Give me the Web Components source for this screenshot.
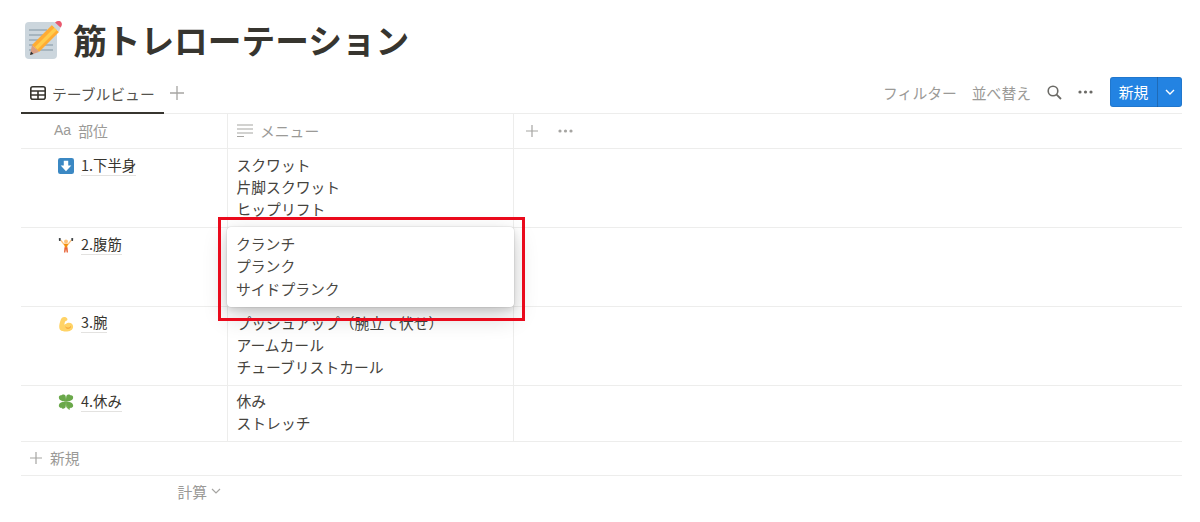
<!DOCTYPE html>
<html lang="ja">
<head>
<meta charset="utf-8">
<title>筋トレローテーション</title>
<style>
    html, body { margin: 0; background: #fff; }
    body {
        font-family: "Noto Sans CJK JP", "Noto Sans", sans-serif;
        color: #37352f;
        width: 1200px;
        height: 522px;
        overflow: hidden;
    }
</style>
</head>
<body>
<db-page>
    <page-title slot="title">筋トレローテーション</page-title>
    <view-bar slot="bar"></view-bar>
    <table-head slot="table"></table-head>
    <table-row slot="table" height="78" pad="5" name="1.下半身" icon="down">
        <div>スクワット</div><div>片脚スクワット</div><div>ヒップリフト</div>
    </table-row>
    <table-row slot="table" height="78" pad="5" name="2.腹筋" icon="lift"></table-row>
    <table-row slot="table" height="78" pad="5" nudge="-1" name="3.腕" icon="arm">
        <div>プッシュアップ（腕立て伏せ）</div><div>アームカール</div><div>チューブリストカール</div>
    </table-row>
    <table-row slot="table" height="55" pad="4" name="4.休み" icon="clover">
        <div>休み</div><div>ストレッチ</div>
    </table-row>
    <table-foot slot="table"></table-foot>
    <cell-popup slot="over">
        <div>クランチ</div><div>プランク</div><div>サイドプランク</div>
    </cell-popup>
</db-page>

<script>
(function () {
    const ICONS = {
        down: `<svg viewBox="0 0 36 36" width="16" height="16"><rect x="0" y="0" width="36" height="36" rx="5" fill="#3b88c3"/><path d="M18 30 L6 17 h7 V6 h10 v11 h7 z" fill="#fff"/></svg>`,
        lift: `<svg viewBox="0 0 36 36" width="16" height="16">
            <path d="M6 7 L14 17 M30 7 L22 17" stroke="#ffc27a" stroke-width="3" fill="none"/>
            <rect x="2" y="2" width="4" height="7" rx="1.5" fill="#3a3f42"/><rect x="30" y="2" width="4" height="7" rx="1.5" fill="#3a3f42"/>
            <circle cx="18" cy="10" r="4.4" fill="#ffc27a"/>
            <path d="M13 15 h10 l-3 9 h-4 z" fill="#f4900c"/>
            <path d="M14.5 23 h7 l1 12 h-3 l-1.5 -8 l-1.5 8 h-3 z" fill="#e8663a"/>
        </svg>`,
        arm: `<svg viewBox="0 0 36 36" width="16" height="16">
            <path d="M14 2 C9 2 7 5 6 9 C4 15 2 21 3 27 C4 33 10 35 17 35 C27 35 34 31 34 24 C34 17 27 14 21 16 C18 17 16 19 15 20 C14 17 15 14 17 11 C20 11 22 9 21 6 C20 3 17 2 14 2 z" fill="#ffd366"/>
            <path d="M17 25 C20 29 26 28 29 24" stroke="#f19020" stroke-width="2" fill="none"/>
        </svg>`,
        clover: `<svg viewBox="0 0 36 36" width="16" height="16">
            <g fill="#6aa84a">
                <path d="M18 17 C12 17 3 15 2 9 C1 4 5 2 8 3 C9 0 15 0 17 4 C18 8 18 13 18 17 z"/>
                <path d="M18 17 C24 17 33 15 34 9 C35 4 31 2 28 3 C27 0 21 0 19 4 C18 8 18 13 18 17 z"/>
                <path d="M18 17 C12 17 3 19 2 25 C1 30 5 32 8 31 C9 34 15 34 17 30 C18 26 18 21 18 17 z"/>
                <path d="M18 17 C24 17 33 19 34 25 C35 30 31 32 28 31 C27 34 21 34 19 30 C18 26 18 21 18 17 z"/>
            </g>
            <path d="M18 17 C18 25 21 31 26 35" stroke="#77b255" stroke-width="2.4" fill="none"/>
        </svg>`,
        memo: `<svg viewBox="0 0 38 38" width="38" height="38">
            <rect x="1" y="1" width="32" height="37" rx="4" fill="#ccd6dd"/>
            <g stroke="#99aab5" stroke-width="1.6">
                <path d="M5 9 H23 M5 14 H20 M5 19 H17 M5 24 H29 M5 29 H29"/>
            </g>
            <path d="M28 4 L35 11 L15 31 L8 24 z" fill="#ffac33"/>
            <path d="M30.5 6.5 L33 9 L13.5 28.5 L11 26 z" fill="#ffcc4d"/>
            <path d="M8 24 L15 31 L6 34 z" fill="#d99e82"/>
            <path d="M7 30.5 L9.5 33 L6 34 z" fill="#292f33"/>
            <path d="M28 4 L30 2 L33 1 L37 5 L36 8 L35 11 z" fill="#ccd6dd"/>
            <path d="M31 1.5 C33 -0.5 36 -0.5 37 1 C38.5 2.5 38 5 36.5 6.5 z" fill="#ea596e"/>
        </svg>`
    };

    const GREY = "#9b9a97";
    const DOTS = `<svg viewBox="0 0 15 4" width="15" height="4"><circle cx="2" cy="2" r="1.6"/><circle cx="7.5" cy="2" r="1.6"/><circle cx="13" cy="2" r="1.6"/></svg>`;

    function define(name, html) {
        customElements.define(name, class extends HTMLElement {
            constructor() {
                super();
                let shadowRoot = this.attachShadow({mode: "open"});
                shadowRoot.innerHTML = typeof html === "function" ? html(this) : html;
            }
        });
    }

    define("db-page", `
        <style>
            :host { display: block; position: relative; width: 1200px; height: 522px; }
            .wrap { display: flex; flex-direction: column; padding: 21px 18px 0 21px; }
            .over { position: absolute; left: 227px; top: 227px; }
            .mark {
                position: absolute; left: 218px; top: 217px;
                width: 301px; height: 98px;
                border: 3px solid #ea0a1c;
            }
        </style>
        <div class="wrap">
            <slot name="title"></slot>
            <slot name="bar"></slot>
            <slot name="table"></slot>
        </div>
        <div class="over"><slot name="over"></slot></div>
        <div class="mark"></div>
    `);

    define("page-title", `
        <style>
            :host { display: flex; align-items: center; height: 38px; margin-left: 3px; gap: 11px; }
            h1 { margin: 0; font-size: 33.7px; line-height: 38px; font-weight: 700; color: #37352f; white-space: nowrap; }
            svg { display: block; }
        </style>
        ${ICONS.memo}
        <h1><slot></slot></h1>
    `);

    define("view-bar", `
        <style>
            :host {
                display: flex; align-items: center; justify-content: space-between;
                height: 55px; box-sizing: border-box; padding-top: 16px;
                border-bottom: 1px solid #ededec; font-size: 14.8px;
            }
            .tab {
                display: flex; align-items: center; width: 143px; height: 38px; box-sizing: border-box;
                padding: 0 0 2px 9px; gap: 6px; border-bottom: 2px solid #37352f; margin-bottom: -1px;
                color: #55534e; white-space: nowrap;
            }
            .left { display: flex; align-items: center; gap: 6px; align-self: flex-end; }
            .plus { display: block; margin-top: -3px; }
            .right { display: flex; align-items: center; color: ${GREY}; white-space: nowrap; padding-bottom: 4px; }
            .right .txt { padding-top: 1px; }
            .txt + .txt { margin-left: 15px; }
            .search { margin-left: 16px; display: block; }
            .dots { margin-left: 16px; display: flex; fill: #6b6a66; }
            .btn {
                display: flex; align-items: center; margin-left: 17px; width: 72px; height: 30px;
                border-radius: 3px; background: #2383e2; color: #fff;
                box-shadow: inset 0 0 0 1px rgba(15,15,15,.1);
            }
            .btn b { font-weight: 400; width: 47px; text-align: center; border-right: 1px solid rgba(15,15,15,.2); line-height: 30px; }
            .btn i { flex: 1; display: flex; justify-content: center; }
        </style>
        <div class="left">
            <div class="tab">
                <svg viewBox="0 0 16 14" width="16" height="14"><rect x="0.8" y="0.8" width="14.4" height="12.4" rx="2" fill="none" stroke="#37352f" stroke-width="1.6"/><path d="M1 5 H15 M1 9 H15 M8 5 V13" stroke="#37352f" stroke-width="1.6"/></svg>
                テーブルビュー
            </div>
            <svg class="plus" viewBox="0 0 14 14" width="14" height="14"><path d="M7 0 V14 M0 7 H14" stroke="#a6a5a2" stroke-width="1.3"/></svg>
        </div>
        <div class="right">
            <span class="txt">フィルター</span><span class="txt">並べ替え</span>
            <svg class="search" viewBox="0 0 15 15" width="15" height="15"><circle cx="6" cy="6" r="4.8" fill="none" stroke="#6b6a66" stroke-width="1.6"/><path d="M9.6 9.6 L14 14" stroke="#6b6a66" stroke-width="1.8"/></svg>
            <span class="dots">${DOTS}</span>
            <div class="btn">
                <b>新規</b>
                <i><svg viewBox="0 0 10 6" width="10" height="6"><path d="M1 1 L5 5 L9 1" fill="none" stroke="#fff" stroke-width="1.4"/></svg></i>
            </div>
        </div>
    `);

    define("table-head", `
        <style>
            :host {
                display: grid; grid-template-columns: 207px 286px 1fr; height: 35px; box-sizing: border-box;
                border-bottom: 1px solid #ededec; color: ${GREY}; font-size: 14.8px;
            }
            .c { display: flex; align-items: center; box-sizing: border-box; border-right: 1px solid #ededec; white-space: nowrap; padding-bottom: 2px; }
            .a { padding-left: 33px; gap: 7px; }
            .aa { font-family: "Liberation Sans", sans-serif; font-size: 14px; }
            .b { padding-left: 9px; gap: 7px; }
            .d { border: 0; padding: 0 0 0 12px; gap: 20px; }
            .d span { display: flex; fill: #a6a5a2; }
        </style>
        <div class="c a"><span class="aa">Aa</span><span>部位</span></div>
        <div class="c b">
            <svg viewBox="0 0 16 13" width="16" height="13"><path d="M0 1 H16 M0 5 H16 M0 9 H16 M0 12.5 H7" stroke="#a6a5a2" stroke-width="1.2"/></svg>
            <span>メニュー</span>
        </div>
        <div class="c d">
            <svg viewBox="0 0 12 12" width="12" height="12"><path d="M6 0 V12 M0 6 H12" stroke="#a6a5a2" stroke-width="1.2"/></svg>
            <span>${DOTS}</span>
        </div>
    `);

    define("table-row", host => `
        <style>
            :host {
                display: grid; grid-template-columns: 207px 286px 1fr; box-sizing: border-box;
                height: ${Number(host.getAttribute("height")) + 1}px;
                border-bottom: 1px solid #ededec; font-size: 14.8px; line-height: 22px;
            }
            .c { box-sizing: border-box; border-right: 1px solid #ededec; overflow: hidden; white-space: nowrap; }
            .n { display: flex; align-items: flex-start; gap: 7px; padding: ${host.getAttribute("pad")}px 0 0 37px; }
            .n svg { display: block; margin-top: 4px; }
            .n span {
                font-size: 14.4px; color: #37352f; border-bottom: 1px solid #e3e2e0; line-height: 21px;
                margin-top: ${host.getAttribute("nudge") || 0}px;
            }
            .m { padding: ${host.getAttribute("pad")}px 0 0 8.5px; color: #45433e; }
            .e { border: 0; }
        </style>
        <div class="c n">${ICONS[host.getAttribute("icon")]}<span>${host.getAttribute("name")}</span></div>
        <div class="c m"><slot></slot></div>
        <div class="c e"></div>
    `);

    define("table-foot", `
        <style>
            :host { display: block; color: ${GREY}; font-size: 14.8px; }
            .add { display: flex; align-items: center; gap: 8px; height: 34px; padding: 0 0 2px 9px; box-sizing: border-box; border-bottom: 1px solid #ededec; }
            .sum { display: flex; justify-content: flex-end; align-items: center; gap: 4px; width: 200px; height: 28px; font-size: 14.8px; margin-top: 1px; }
        </style>
        <div class="add">
            <svg viewBox="0 0 12 12" width="12" height="12"><path d="M6 0 V12 M0 6 H12" stroke="#a6a5a2" stroke-width="1.2"/></svg>
            <span>新規</span>
        </div>
        <div class="sum">
            <span>計算</span>
            <svg viewBox="0 0 10 6" width="10" height="6"><path d="M1 1 L5 5 L9 1" fill="none" stroke="#a6a5a2" stroke-width="1.2"/></svg>
        </div>
    `);

    define("cell-popup", `
        <style>
            :host {
                display: block; box-sizing: border-box; width: 287px; height: 80px; padding: 6px 9px;
                background: #fff; border-radius: 4px; font-size: 14.8px; line-height: 22.3px; color: #4a4843;
                box-shadow: 0 0 0 1px rgba(15,15,15,.05), 0 3px 6px rgba(15,15,15,.1), 0 9px 24px rgba(15,15,15,.2);
            }
        </style>
        <slot></slot>
    `);
})();
</script>
</body>
</html>
